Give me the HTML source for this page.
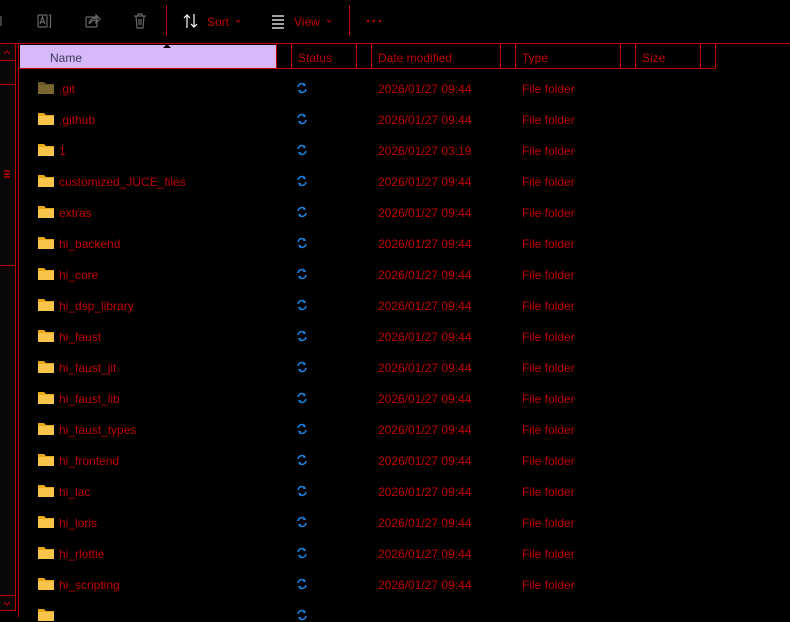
<!DOCTYPE html>
<html><head><meta charset="utf-8"><style>
*{margin:0;padding:0;box-sizing:border-box}
body{width:790px;height:617px;background:#000;position:relative;overflow:hidden;font-family:"Segoe UI","Liberation Sans",sans-serif;font-size:12px;color:#c00000}
.a{position:absolute}
.l{position:absolute;background:#c00000}
.t{position:absolute;white-space:nowrap;line-height:14px}
</style></head><body>
<svg class="a" style="left:0;top:0" width="400" height="43">
 <g fill="none" stroke="#666" stroke-width="1.2">
  <path d="M0 17 h1 v8 h-1"/>
  <rect x="38" y="15" width="9" height="12" rx="1"/><path d="M40 24 l2.5-7 l2.5 7 M41 22 h3 M49 15 h1.5 v12 h-1.5"/>
  <rect x="86" y="17" width="11" height="10" rx="1"/><path d="M89 24 q1-6 7-6 v-3 l4 4 l-4 4 v-3 q-4 0-7 4"/>
  <path d="M134 16 h12 M138 16 v-2 h4 v2 M136 16 l1 12 h6 l1-12 M139 19 v6 M141 19 v6"/>
 </g>
 <path d="M187 15 v13 M184 18 l3-3 l3 3 M194 14 v13 M191 24 l3 3 l3-3" stroke="#fff" stroke-width="1.2" fill="none"/>
 <path d="M272 16 h12 M272 20 h12 M272 24 h12 M272 28 h12" stroke="#fff" stroke-width="1.2"/>
 <path d="M236 20 l2 2 l2-2 M327 20 l2 2 l2-2" stroke="#c00000" fill="none"/>
 <circle cx="368" cy="21" r="1.2" fill="#c00000"/><circle cx="374" cy="21" r="1.2" fill="#c00000"/><circle cx="380" cy="21" r="1.2" fill="#c00000"/>
</svg>
<div class="l" style="left:166px;top:5px;width:1px;height:31px"></div>
<div class="l" style="left:349px;top:5px;width:1px;height:31px"></div>
<div class="t" style="left:207px;top:15px">Sort</div>
<div class="t" style="left:294px;top:15px">View</div>
<div class="l" style="left:0;top:43px;width:790px;height:1px"></div>
<div class="a" style="left:0;top:44px;width:15px;height:566px;background:#080808"></div>
<div class="l" style="left:15px;top:44px;width:1px;height:567px"></div>
<div class="l" style="left:18px;top:44px;width:1px;height:573px"></div>
<div class="l" style="left:0;top:60px;width:15px;height:1px"></div>
<div class="l" style="left:0;top:84px;width:15px;height:1px"></div>
<div class="l" style="left:0;top:265px;width:15px;height:1px"></div>
<div class="l" style="left:0;top:595px;width:15px;height:1px"></div>
<div class="l" style="left:0;top:610px;width:16px;height:1px"></div>
<svg class="a" style="left:0;top:44px" width="15" height="567">
 <path d="M4 10 l3-3 l3 3" stroke="#c00000" fill="none"/>
 <path d="M4 127 h6 M4 130 h6 M4 133 h6" stroke="#c00000" stroke-width="1.5"/>
 <path d="M4 558 l3 3 l3-3" stroke="#c00000" fill="none"/>
</svg>
<div class="a" style="left:20px;top:45px;width:256px;height:24px;background:#d7b8f8"></div>
<svg class="a" style="left:163px;top:44px" width="8" height="5"><path d="M0 4 L4 0 L8 4Z" fill="#000"/></svg>
<div class="l" style="left:19px;top:68px;width:697px;height:1px"></div>
<div class="l" style="left:276px;top:44px;width:1px;height:25px"></div>
<div class="l" style="left:291px;top:44px;width:1px;height:25px"></div>
<div class="l" style="left:356px;top:44px;width:1px;height:25px"></div>
<div class="l" style="left:371px;top:44px;width:1px;height:25px"></div>
<div class="l" style="left:500px;top:44px;width:1px;height:25px"></div>
<div class="l" style="left:515px;top:44px;width:1px;height:25px"></div>
<div class="l" style="left:620px;top:44px;width:1px;height:25px"></div>
<div class="l" style="left:635px;top:44px;width:1px;height:25px"></div>
<div class="l" style="left:700px;top:44px;width:1px;height:25px"></div>
<div class="l" style="left:715px;top:44px;width:1px;height:25px"></div>
<div class="t" style="left:50px;top:51px;color:#3a3a5a">Name</div>
<div class="t" style="left:298px;top:51px">Status</div>
<div class="t" style="left:378px;top:51px">Date modified</div>
<div class="t" style="left:522px;top:51px">Type</div>
<div class="t" style="left:642px;top:51px">Size</div>
<div id="rows"></div>
<script>
var n=[".git",".github","1","customized_JUCE_files","extras","hi_backend","hi_core","hi_dsp_library","hi_faust","hi_faust_jit","hi_faust_lib","hi_faust_types","hi_frontend","hi_lac","hi_loris","hi_rlottie","hi_scripting",""];
var h="";
n.forEach(function(s,i){var y=88+31*i;var c=i==0?"#7a6630":"#f8c44a";var c2=i==0?"#6a5828":"#e8a818";
var d=i==2?"2026/01/27 03:19":"2026/01/27 09:44";
h+='<svg class="a" style="left:38px;top:'+(y-7)+'px" width="16" height="14"><path d="M0 1 h6 l2 2 h8 v10 h-16z" fill="'+c2+'"/><rect x="0" y="4" width="16" height="9" fill="'+c+'"/></svg>';
h+='<svg class="a" style="left:296px;top:'+(y-6)+'px" width="12" height="12"><path d="M2 5 a4 4 0 0 1 7-2 M10 7 a4 4 0 0 1 -7 2" stroke="#1a80e0" stroke-width="1.5" fill="none"/><path d="M8 1 l2 3 h-3z M4 11 l-2 -3 h3z" fill="#1a80e0"/></svg>';
if(i<17){h+='<div class="t" style="left:59px;top:'+(y-6)+'px">'+s+'</div>';
h+='<div class="t" style="left:378px;top:'+(y-6)+'px">'+d+'</div><div class="t" style="left:522px;top:'+(y-6)+'px">File folder</div>';}});
document.getElementById("rows").innerHTML=h;
</script>
</body></html>
